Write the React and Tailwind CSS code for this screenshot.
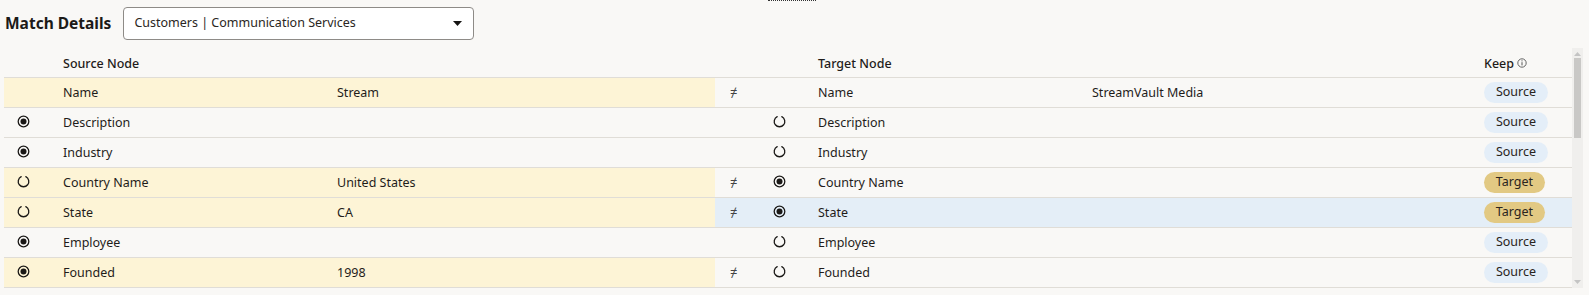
import React from 'react'

const rows = [
  { label: 'Name', src: 'Stream', tgt: 'StreamVault Media', diff: true, srcRadio: null, tgtRadio: null, keep: 'Source' },
  { label: 'Description', src: '', tgt: '', diff: false, srcRadio: true, tgtRadio: false, keep: 'Source' },
  { label: 'Industry', src: '', tgt: '', diff: false, srcRadio: true, tgtRadio: false, keep: 'Source' },
  { label: 'Country Name', src: 'United States', tgt: '', diff: true, srcRadio: false, tgtRadio: true, keep: 'Target' },
  { label: 'State', src: 'CA', tgt: '', diff: true, srcRadio: false, tgtRadio: true, keep: 'Target', selected: true },
  { label: 'Employee', src: '', tgt: '', diff: false, srcRadio: true, tgtRadio: false, keep: 'Source' },
  { label: 'Founded', src: '1998', tgt: '', diff: true, srcRadio: true, tgtRadio: false, keep: 'Source' },
]

const Radio = ({ checked }) => (
  <svg width="13" height="13" viewBox="0 0 13 13" className="-mt-[2px]">
    {checked ? (
      <>
        <circle cx="6.5" cy="6.5" r="5.3" fill="none" stroke="#1a1816" strokeWidth="1.3" />
        <circle cx="6.5" cy="6.5" r="3" fill="#1a1816" />
      </>
    ) : (
      <path d="M4.2 1.7 A5.3 5.3 0 1 0 8.8 1.7" fill="none" stroke="#1a1816" strokeWidth="1.3" strokeLinecap="round" />
    )}
  </svg>
)

const Badge = ({ kind }) =>
  kind === 'Target' ? (
    <span className="inline-flex items-center justify-center h-[21px] w-[61px] rounded-full bg-[#e2c983] text-[12.5px] text-[#2a2420]">Target</span>
  ) : (
    <span className="inline-flex items-center justify-center h-[21px] w-[64px] rounded-full bg-[#e4eef8] text-[12.5px] text-[#2a2420]">Source</span>
  )

const App = () => {
  return (
    <div
      className="relative w-[1589px] h-[295px] bg-[#f9f8f6] text-[#1f1c1a] overflow-hidden"
      style={{ fontFamily: '"Noto Sans", "Open Sans", sans-serif' }}
    >
      {/* drag handle */}
      <div className="absolute top-0 left-[768px] w-[48px] border-t border-dotted border-[#333]" />

      <div className="pt-[7px] pl-[5px] flex items-center h-[40px]">
        <span className="font-bold text-[15.5px] text-[#1c1a18]">Match Details</span>
        <div className="ml-[12px] w-[351px] h-[33px] bg-white border border-[#8e8b87] rounded-[4px] flex items-center pl-[10px] pr-[11px]">
          <span className="text-[12.5px] text-[#2a2622] flex-1">Customers | Communication Services</span>
          <svg width="9" height="5" viewBox="0 0 9 5">
            <path d="M0 0 L9 0 L4.5 5 Z" fill="#161513" />
          </svg>
        </div>
      </div>

      <div className="mt-[8px] flex">
        <div className="ml-[4px] w-[1568px] text-[12.5px]">
          {/* header */}
          <div className="grid grid-cols-[51px_274px_386px_45px_50px_274px_392px_96px] h-[30px] items-center border-b border-[#e0ddd7] pt-[4px] font-medium">
            <div />
            <div className="pl-2">Source Node</div>
            <div />
            <div />
            <div />
            <div className="pl-2">Target Node</div>
            <div />
            <div className="pl-2 flex items-center gap-[3px]">
              Keep
              <svg width="10" height="10" viewBox="0 0 10 10" className="-mt-[4px]">
                <circle cx="5" cy="5" r="4.2" fill="none" stroke="#555" strokeWidth="0.9" />
                <path d="M5 4.2 V7.4" stroke="#555" strokeWidth="1" />
                <circle cx="5" cy="2.8" r="0.6" fill="#555" />
              </svg>
            </div>
          </div>

          {rows.map((r) => {
            const srcBg = r.diff ? 'bg-[#fdf4d6]' : ''
            const tgtBg = r.selected ? 'bg-[#e4eef7]' : ''
            return (
              <div
                key={r.label}
                className="grid grid-cols-[51px_274px_386px_45px_50px_274px_392px_96px] h-[30px] border-b border-[#e0ddd7]"
              >
                <div className={`pl-[13px] flex items-center ${srcBg}`}>
                  {r.srcRadio !== null && <Radio checked={r.srcRadio} />}
                </div>
                <div className={`pl-2 pt-[2px] flex items-center ${srcBg}`}>{r.label}</div>
                <div className={`pl-2 pt-[2px] flex items-center ${srcBg}`}>{r.src}</div>
                <div className={`pl-[15px] flex items-center text-[13px] text-[#444] ${tgtBg}`}>{r.diff ? '≠' : ''}</div>
                <div className={`pl-[13px] flex items-center ${tgtBg}`}>
                  {r.tgtRadio !== null && <Radio checked={r.tgtRadio} />}
                </div>
                <div className={`pl-2 pt-[2px] flex items-center ${tgtBg}`}>{r.label}</div>
                <div className={`pl-2 pt-[2px] flex items-center ${tgtBg}`}>{r.tgt}</div>
                <div className={`pl-2 flex items-center ${tgtBg}`}>
                  <Badge kind={r.keep} />
                </div>
              </div>
            )
          })}
        </div>

        {/* scrollbar */}
        <div className="w-[11px] h-[240px] bg-[#f0efed] flex flex-col items-center">
          <svg width="7" height="6" viewBox="0 0 7 6" className="mt-[3px]">
            <path d="M0 5 L3.5 1 L7 5 Z" fill="#c4c4c4" />
          </svg>
          <div className="mt-[1px] w-[7px] h-[80px] bg-[#c9c8c6]" />
          <div className="flex-1" />
          <svg width="7" height="6" viewBox="0 0 7 6" className="mb-[3px]">
            <path d="M0 1 L3.5 5 L7 1 Z" fill="#c4c4c4" />
          </svg>
        </div>
      </div>
    </div>
  )
}

export default App
